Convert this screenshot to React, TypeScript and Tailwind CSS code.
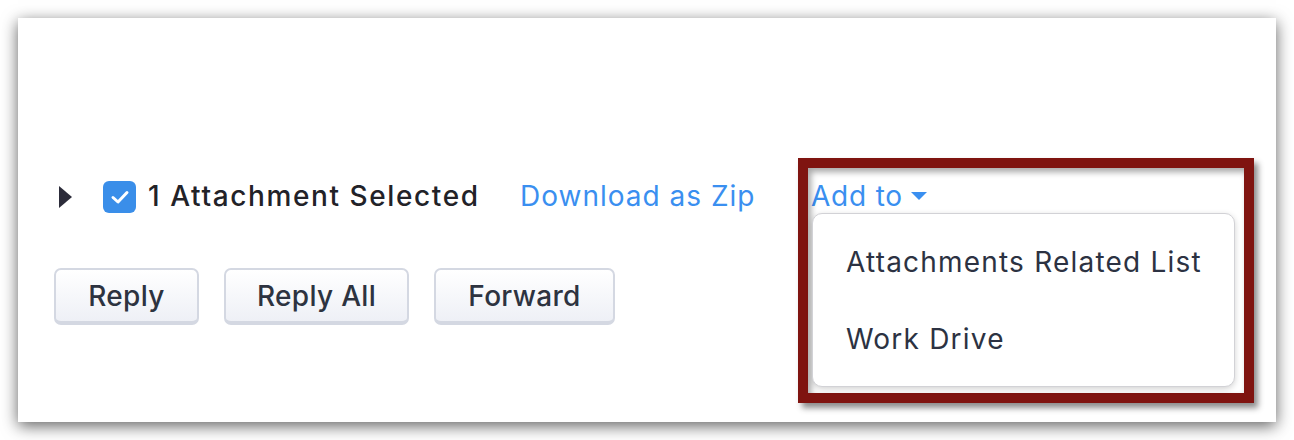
import React from "react";

export default function App() {
  const font = { fontFamily: "Inter, 'Noto Sans', sans-serif" };
  return (
    <div className="w-[1294px] h-[440px] bg-white p-[18px]" style={font}>
      <div className="relative w-[1258px] h-[404px] bg-white shadow-[0_4px_15px_rgba(0,0,0,0.62)]">
        <div className="flex flex-col pl-[36px] pt-[163px]">
          <div className="flex items-center h-[32px]">
            <div className="w-[13px] ml-[5px] flex items-center">
              <svg width="13" height="22" viewBox="0 0 13 22">
                <path d="M0 0 L13 11 L0 22 Z" fill="#2c2c3a" />
              </svg>
            </div>
            <div className="ml-[31px] w-[33px] h-[32px] rounded-[6px] bg-[#3a8ee9] flex items-center justify-center">
              <svg width="20" height="16" viewBox="0 0 20 16">
                <path d="M3 8.5 L8 13 L17 3.5" fill="none" stroke="white" strokeWidth="3" strokeLinecap="round" strokeLinejoin="round" />
              </svg>
            </div>
            <span className="ml-[12px] w-[372px] text-[28px] font-medium text-[#222228] leading-none whitespace-nowrap tracking-[1.6px] -mt-[3px]">
              1 Attachment Selected
            </span>
            <span className="w-[291px] text-[28px] text-[#3a8ff0] leading-none whitespace-nowrap tracking-[1px] -mt-[3px]">
              Download as Zip
            </span>
            <span className="flex items-center text-[28px] text-[#3a8ff0] leading-none whitespace-nowrap tracking-[0.8px] -mt-[3px]">
              Add to
              <svg className="ml-[8px]" width="16" height="8" viewBox="0 0 16 8">
                <path d="M0 0 L16 0 L8 8 Z" fill="#3a8ff0" />
              </svg>
            </span>
          </div>
          <div className="flex gap-[25px] mt-[55px]">
            {["Reply", "Reply All", "Forward"].map((t, i) => (
              <button
                key={t}
                className={`h-[57px] ${["w-[145px]", "w-[185px]", "w-[181px]"][i]} rounded-[7px] border-2 border-b-[4px] border-[#d4d8e2] bg-gradient-to-b from-white to-[#eef0f6] text-[28px] font-medium text-[#2d3340] flex items-center justify-center tracking-[0.3px]`}
                style={font}
              >
                {t}
              </button>
            ))}
          </div>
        </div>

        <div className="absolute left-[780px] top-[140px] w-[456px] h-[245px] border-[10px] border-[#7f1410] shadow-[4px_5px_6px_rgba(0,0,0,0.45),inset_3px_4px_6px_rgba(0,0,0,0.35)] pointer-events-none" />

        <div className="absolute left-[794px] top-[195px] w-[423px] h-[174px] rounded-[10px] bg-white border border-[#d2d2d6] shadow-[0_2px_6px_rgba(0,0,0,0.18)] flex flex-col pl-[33px] pt-[34px] gap-[49px]">
          <span className="text-[28px] text-[#2c3242] leading-none whitespace-nowrap tracking-[1.2px]">
            Attachments Related List
          </span>
          <span className="text-[28px] text-[#2c3242] leading-none whitespace-nowrap tracking-[1.2px]">
            Work Drive
          </span>
        </div>
      </div>
    </div>
  );
}
